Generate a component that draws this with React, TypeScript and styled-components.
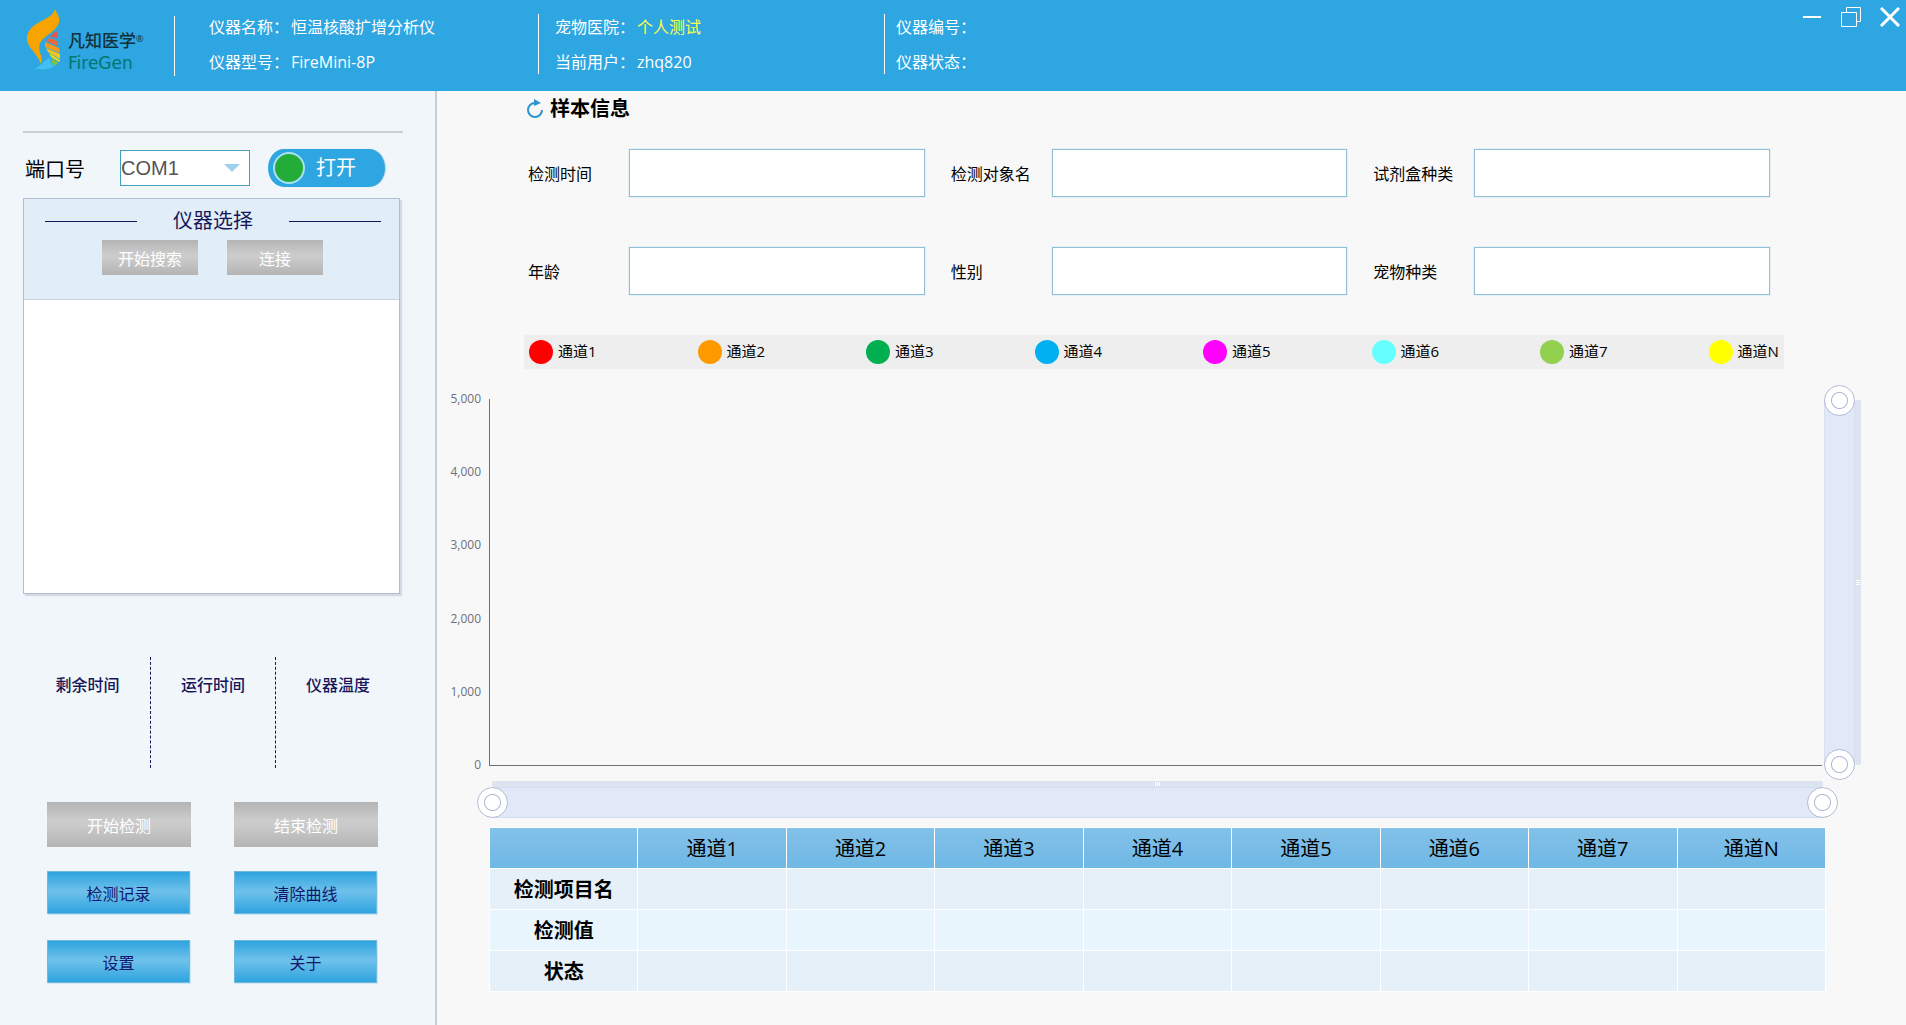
import React, { useState } from 'react';
import styled, { createGlobalStyle } from 'styled-components';

const GlobalStyle = createGlobalStyle`
  *, *::before, *::after { box-sizing: border-box; }
  body {
    margin: 0;
    background: #f8f8f8;
    font-family: "Open Sans", "Noto Sans CJK SC", sans-serif;
    font-size: 16px;
    color: #000;
  }
  button, input, select { font-family: inherit; }
`;

const Page = styled.div`
  display: flex;
  flex-direction: column;
  min-height: 100vh;
`;

const Header = styled.header`
  display: flex;
  height: 91px;
  background: #2ea6e1;
  color: #fff;
`;

const Brand = styled.div`
  flex: 0 0 174px;
  display: flex;
  padding: 8px 0 0 25px;
`;

const BrandText = styled.div`
  display: flex;
  flex-direction: column;
  padding-top: 21px;
`;

const BrandCn = styled.span`
  display: flex;
  font-size: 17px;
  line-height: 24px;
  font-weight: 500;
  color: #12303c;
  white-space: nowrap;
`;

const Registered = styled.span`
  font-size: 9px;
  line-height: 20px;
`;

const BrandEn = styled.span`
  font-family: "DejaVu Sans", sans-serif;
  font-size: 17px;
  line-height: 20px;
  color: #00766e;
`;

const InfoGroup = styled.dl<{ $width: number; $indent: number; $raised?: boolean }>`
  flex: 0 1 ${(p) => p.$width}px;
  display: flex;
  flex-direction: column;
  gap: 12px;
  height: 60px;
  margin: ${(p) => (p.$raised ? 14 : 16)}px 0 0;
  padding: ${(p) => (p.$raised ? 2 : 0)}px 0 0 ${(p) => p.$indent}px;
  border-left: 1px solid #fff;
`;

const InfoRow = styled.div<{ $highlight?: boolean }>`
  display: flex;
  gap: 2px;
  line-height: 23px;
  white-space: nowrap;
  dt { width: 80px; }
  dd { margin: 0; color: ${(p) => (p.$highlight ? '#ffff4d' : '#fff')}; }
`;

const WindowControls = styled.div`
  display: flex;
  gap: 19px;
  margin-left: auto;
  padding: 7px 6px 0 0;
`;

const WindowButton = styled.button`
  width: 20px;
  height: 20px;
  padding: 0;
  border: 0;
  background: none;
  color: #fff;
  svg { display: block; }
`;

const Body = styled.div`
  flex: 1;
  display: flex;
`;

const Sidebar = styled.aside`
  flex: 0 0 437px;
  padding: 40px 32px 40px 23px;
  background: #f0f6fa;
  border-right: 2px solid #cdcdcf;
`;

const Rule = styled.hr`
  height: 2px;
  margin: 0;
  border: 0;
  background: #cdcdcf;
`;

const PortRow = styled.div`
  display: flex;
  align-items: center;
  margin-top: 16px;
  font-size: 20px;
`;

const PortLabel = styled.label`
  width: 97px;
  padding-left: 2px;
`;

const SelectBox = styled.div`
  position: relative;
  width: 130px;
  height: 36px;
`;

const PortSelect = styled.select`
  appearance: none;
  width: 100%;
  height: 100%;
  padding: 0;
  border: 1px solid #439fbd;
  border-radius: 0;
  background: #fff;
  color: #555;
  font-family: "Liberation Sans", sans-serif;
  font-size: 20px;
`;

const SelectArrow = styled.span`
  position: absolute;
  right: 10px;
  top: 14px;
  border: 8px solid transparent;
  border-top-color: #9ed0ec;
  border-bottom: 0;
  pointer-events: none;
`;

const OpenButton = styled.button`
  display: flex;
  align-items: center;
  gap: 11px;
  width: 117px;
  height: 38px;
  margin-left: 18px;
  padding: 0 0 0 5px;
  border: 0;
  border-radius: 16px / 19px;
  background: #2ea6e1;
  box-shadow: 1px 0 1px #c4d3de;
  color: #fff;
  font-size: 20px;
  line-height: 30px;
`;

const Lamp = styled.span`
  width: 32px;
  height: 32px;
  border: 2px solid #a9e2f3;
  border-radius: 50%;
  background: #23ac38;
`;

const DevicePanel = styled.section`
  width: 377px;
  margin-top: 11px;
  border: 1px solid #b4bccf;
  box-shadow: 2px 2px 1px #d3dae5;
`;

const DeviceHead = styled.div`
  height: 101px;
  border-bottom: 1px solid #c9d3e2;
  background: #e2eef7;
`;

const DeviceTitle = styled.h2`
  display: flex;
  align-items: center;
  justify-content: space-between;
  margin: 0;
  padding: 7px 18px 0 21px;
  font-size: 20px;
  font-weight: 400;
  line-height: 30px;
  color: #16175a;
  &::before, &::after {
    content: "";
    width: 92px;
    height: 1px;
    background: #16175a;
  }
`;

const DeviceActions = styled.div`
  display: flex;
  gap: 29px;
  margin-top: 4px;
  padding-left: 78px;
`;

const DeviceList = styled.div`
  height: 293px;
  background: #fff;
`;

const DisabledButton = styled.button<{ $wide?: boolean }>`
  width: ${(p) => (p.$wide ? 144 : 96)}px;
  height: ${(p) => (p.$wide ? 45 : 35)}px;
  padding: 0;
  border: 0;
  background: linear-gradient(#b4b4b4, #cbcbcb 40%, #cbcbcb 50%, #b4b4b4);
  color: #fff;
  font-size: 16px;
`;

const ActionButton = styled.button`
  width: 143px;
  height: 43px;
  padding: 0;
  border: 1px solid #6fb9e0;
  background: linear-gradient(#2ea3df, #6cc0ea 45%, #6cc0ea 50%, #2ea3df);
  box-shadow: 1px 1px 0 #cfe6f3;
  color: #10186c;
  font-size: 16px;
`;

const Readings = styled.dl`
  display: grid;
  grid-template-columns: repeat(3, 125px);
  height: 111px;
  margin: 63px 0 34px;
  padding-left: 2px;
`;

const Reading = styled.div`
  padding-top: 16px;
  text-align: center;
  font-weight: 500;
  line-height: 24px;
  color: #16175a;
  & + & { border-left: 1px dashed #16175a; }
  dd { margin: 0; }
`;

const Actions = styled.div`
  display: grid;
  grid-template-columns: 144px 144px;
  grid-auto-rows: 45px;
  gap: 24px 43px;
  padding-left: 24px;
`;

const Main = styled.main`
  flex: 1;
  min-width: 0;
  padding: 6px 0 32px;
`;

const SectionTitle = styled.h1`
  display: flex;
  align-items: center;
  gap: 6px;
  margin: 0 0 28px 89px;
  font-size: 20px;
  font-weight: 700;
  line-height: 24px;
`;

const RefreshButton = styled.button`
  width: 18px;
  height: 20px;
  padding: 0;
  border: 0;
  background: none;
  svg { display: block; }
`;

const SampleForm = styled.form`
  display: grid;
  grid-template-columns: repeat(3, 1fr);
  gap: 50px 26px;
  margin: 0 136px 0 91px;
`;

const Field = styled.label`
  display: flex;
  align-items: center;
`;

const FieldName = styled.span`
  flex: 0 0 101px;
`;

const FieldInput = styled.input`
  flex: 1;
  min-width: 0;
  height: 48px;
  padding: 0 8px;
  border: 1px solid #93bed6;
  outline: 1px solid #e4f2f8;
  background: #fff;
  font-size: 16px;
`;

const Legend = styled.ul`
  display: flex;
  justify-content: space-between;
  margin: 40px 122px 0 87px;
  padding: 5px;
  background: #eee;
  list-style: none;
`;

const LegendItem = styled.li<{ $color: string }>`
  display: flex;
  gap: 5px;
  font-size: 15px;
  line-height: 22px;
  &::before {
    content: "";
    width: 24px;
    height: 24px;
    border-radius: 50%;
    background: ${(p) => p.$color};
  }
`;

const Chart = styled.section`
  display: grid;
  grid-template-columns: 52px 1fr 37px;
  margin: 30px 45px 0 0;
`;

const Scale = styled.ol`
  display: flex;
  flex-direction: column;
  justify-content: space-between;
  margin: -7px 8px -6px 0;
  padding: 0;
  list-style: none;
  text-align: right;
  font-size: 12px;
  line-height: 14px;
  color: #6e7079;
`;

const Plot = styled.div`
  height: 367px;
  margin-right: 2px;
  border-left: 1px solid #6e7079;
  border-bottom: 1px solid #6e7079;
`;

const Zoom = styled.div<{ $vertical?: boolean }>`
  display: grid;
  ${(p) =>
    p.$vertical
      ? 'grid-template-columns: 31px 6px; margin: 1px 0;'
      : 'grid-template-rows: 6px 31px; grid-column: 2; margin: 15px 1px 0 3px;'}
`;

const ZoomGrip = styled.span<{ $vertical?: boolean }>`
  display: flex;
  align-items: center;
  justify-content: center;
  border-radius: 2px;
  background: #dce4f0;
  ${(p) => (p.$vertical ? 'grid-column: 2; grid-row: 1;' : '')}
  &::before {
    content: "";
    width: ${(p) => (p.$vertical ? 4 : 5)}px;
    height: ${(p) => (p.$vertical ? 5 : 4)}px;
    background: repeating-linear-gradient(
      ${(p) => (p.$vertical ? '180deg' : '90deg')}, #fff 0 1px, #dce4f0 1px 2px);
  }
`;

const ZoomTrack = styled.div<{ $vertical?: boolean }>`
  position: relative;
  background: #e1e8f7;
  ${(p) =>
    p.$vertical
      ? 'grid-column: 1; grid-row: 1; border: solid #d9e1f0; border-width: 0 1px;'
      : 'border: solid #d5deef; border-width: 1px 0;'}
`;

const Handle = styled.input<{ $vertical?: boolean }>`
  position: absolute;
  appearance: none;
  margin: 0;
  background: none;
  pointer-events: none;
  ${(p) =>
    p.$vertical
      ? 'writing-mode: vertical-lr; direction: rtl; left: -1px; top: -15px; width: 31px; height: calc(100% + 30px);'
      : 'left: -15px; top: -1px; width: calc(100% + 30px); height: 31px;'}
  &::-webkit-slider-thumb {
    appearance: none;
    width: 31px;
    height: 31px;
    border: 1px solid #b3bcd6;
    border-radius: 50%;
    background: radial-gradient(circle, #fff 7px, #acb8d1 8px, #fff 9px);
    pointer-events: auto;
  }
`;

const ResultTable = styled.table`
  width: calc(100% - 132px);
  margin: 9px 80px 0 52px;
  table-layout: fixed;
  border-spacing: 1px;
  background: #fff;
  font-size: 20px;
  line-height: 30px;
  text-align: center;
`;

const HeadCell = styled.th`
  height: 40px;
  padding: 2px 0 0;
  background: linear-gradient(#83c1e9, #6fb8e5);
  font-weight: 400;
`;

const ResultRow = styled.tr`
  background: #e5f0f8;
  &:nth-child(even) { background: #e9f5fc; }
  th, td { height: 40px; padding: 2px 0 0; }
  th { font-weight: 700; }
`;

const channels = [
  { name: '通道1', color: '#ff0000' },
  { name: '通道2', color: '#ff9900' },
  { name: '通道3', color: '#00b050' },
  { name: '通道4', color: '#00b0f0' },
  { name: '通道5', color: '#ff00ff' },
  { name: '通道6', color: '#66ffff' },
  { name: '通道7', color: '#92d050' },
  { name: '通道N', color: '#ffff00' },
];

const fields = ['检测时间', '检测对象名', '试剂盒种类', '年龄', '性别', '宠物种类'];
const ticks = ['5,000', '4,000', '3,000', '2,000', '1,000', '0'];
const resultRows = ['检测项目名', '检测值', '状态'];

function FlameLogo() {
  return (
    <svg width="43" height="64" viewBox="0 0 43 64" aria-hidden="true">
      <path fill="#f7a400" d="M30 1C27 13 4 13 2 29C1 39 11 43 16 56C19 47 10 41 17 32C24 25 36 20 34 10C33 6 31 4 30 1Z" />
      <path fill="#e8554a" d="M32 23Q27 25 25 29L33 30Z" />
      <path fill="#ea6a3c" d="M24 30L21 33L32 38L33 36L31 32Z" />
      <path fill="#f39a1f" d="M20 34L20 39L35 45L34 40Z" />
      <path fill="#f7c51a" d="M21 40L23 44L35 51L35 46Z" />
      <path fill="#e9dd1c" d="M24 45L26 49L34 54L35 52Z" />
      <path fill="#7cc142" d="M27 50L26 54L30 58L33 55Z" />
      <path fill="#3fc0f0" d="M8 61C15 60 18 52 25 50L25 54L29 58C24 63 14 61 8 61Z" />
    </svg>
  );
}

function ZoomSlider({ vertical, label }: { vertical?: boolean; label: string }) {
  const [range, setRange] = useState([0, 100]);
  const update = (index: number) => (e: React.ChangeEvent<HTMLInputElement>) => {
    const next = [...range];
    next[index] = Number(e.target.value);
    setRange(next);
  };
  return (
    <Zoom $vertical={vertical}>
      <ZoomGrip $vertical={vertical} />
      <ZoomTrack $vertical={vertical}>
        {range.map((value, i) => (
          <Handle
            key={i}
            type="range"
            $vertical={vertical}
            value={value}
            onChange={update(i)}
            aria-label={label}
          />
        ))}
      </ZoomTrack>
    </Zoom>
  );
}

export default function App() {
  return (
    <Page>
      <GlobalStyle />
      <Header>
        <Brand>
          <FlameLogo />
          <BrandText>
            <BrandCn>凡知医学<Registered>®</Registered></BrandCn>
            <BrandEn>FireGen</BrandEn>
          </BrandText>
        </Brand>
        <InfoGroup $width={364} $indent={34}>
          <InfoRow><dt>仪器名称：</dt><dd>恒温核酸扩增分析仪</dd></InfoRow>
          <InfoRow><dt>仪器型号：</dt><dd>FireMini-8P</dd></InfoRow>
        </InfoGroup>
        <InfoGroup $width={346} $indent={16} $raised>
          <InfoRow $highlight><dt>宠物医院：</dt><dd>个人测试</dd></InfoRow>
          <InfoRow><dt>当前用户：</dt><dd>zhq820</dd></InfoRow>
        </InfoGroup>
        <InfoGroup $width={346} $indent={11} $raised>
          <InfoRow><dt>仪器编号：</dt><dd /></InfoRow>
          <InfoRow><dt>仪器状态：</dt><dd /></InfoRow>
        </InfoGroup>
        <WindowControls>
          <WindowButton aria-label="最小化">
            <svg width="20" height="20" viewBox="0 0 20 20"><path d="M1 10H19" stroke="currentColor" strokeWidth="2" /></svg>
          </WindowButton>
          <WindowButton aria-label="还原">
            <svg width="20" height="20" viewBox="0 0 20 20" fill="none" stroke="currentColor">
              <path d="M.5 5.5H15.5V19.5H.5ZM5.5 5.5V.5H19.5V14.5H15.5" />
            </svg>
          </WindowButton>
          <WindowButton aria-label="关闭">
            <svg width="20" height="20" viewBox="0 0 20 20"><path d="M1 1L19 19M19 1L1 19" stroke="currentColor" strokeWidth="3" /></svg>
          </WindowButton>
        </WindowControls>
      </Header>
      <Body>
        <Sidebar>
          <Rule />
          <PortRow>
            <PortLabel htmlFor="port">端口号</PortLabel>
            <SelectBox>
              <PortSelect id="port"><option>COM1</option></PortSelect>
              <SelectArrow />
            </SelectBox>
            <OpenButton><Lamp />打开</OpenButton>
          </PortRow>
          <DevicePanel>
            <DeviceHead>
              <DeviceTitle>仪器选择</DeviceTitle>
              <DeviceActions>
                <DisabledButton disabled>开始搜索</DisabledButton>
                <DisabledButton disabled>连接</DisabledButton>
              </DeviceActions>
            </DeviceHead>
            <DeviceList />
          </DevicePanel>
          <Readings>
            <Reading><dt>剩余时间</dt><dd /></Reading>
            <Reading><dt>运行时间</dt><dd /></Reading>
            <Reading><dt>仪器温度</dt><dd /></Reading>
          </Readings>
          <Actions>
            <DisabledButton $wide disabled>开始检测</DisabledButton>
            <DisabledButton $wide disabled>结束检测</DisabledButton>
            <ActionButton>检测记录</ActionButton>
            <ActionButton>清除曲线</ActionButton>
            <ActionButton>设置</ActionButton>
            <ActionButton>关于</ActionButton>
          </Actions>
        </Sidebar>
        <Main>
          <SectionTitle>
            <RefreshButton aria-label="刷新">
              <svg width="18" height="20" viewBox="0 0 18 20">
                <path d="M9 4A7 7 0 1 0 16 11" fill="none" stroke="#2b94d1" strokeWidth="2" />
                <path d="M8 0L15 4L8 7Z" fill="#2b94d1" />
              </svg>
            </RefreshButton>
            样本信息
          </SectionTitle>
          <SampleForm>
            {fields.map((name) => (
              <Field key={name}>
                <FieldName>{name}</FieldName>
                <FieldInput type="text" />
              </Field>
            ))}
          </SampleForm>
          <Legend>
            {channels.map((c) => (
              <LegendItem key={c.name} $color={c.color}>{c.name}</LegendItem>
            ))}
          </Legend>
          <Chart>
            <Scale>{ticks.map((t) => <li key={t}>{t}</li>)}</Scale>
            <Plot />
            <ZoomSlider vertical label="纵轴缩放" />
            <ZoomSlider label="横轴缩放" />
          </Chart>
          <ResultTable>
            <thead>
              <tr>
                <HeadCell />
                {channels.map((c) => <HeadCell key={c.name} scope="col">{c.name}</HeadCell>)}
              </tr>
            </thead>
            <tbody>
              {resultRows.map((row) => (
                <ResultRow key={row}>
                  <th scope="row">{row}</th>
                  {channels.map((c) => <td key={c.name} />)}
                </ResultRow>
              ))}
            </tbody>
          </ResultTable>
        </Main>
      </Body>
    </Page>
  );
}
